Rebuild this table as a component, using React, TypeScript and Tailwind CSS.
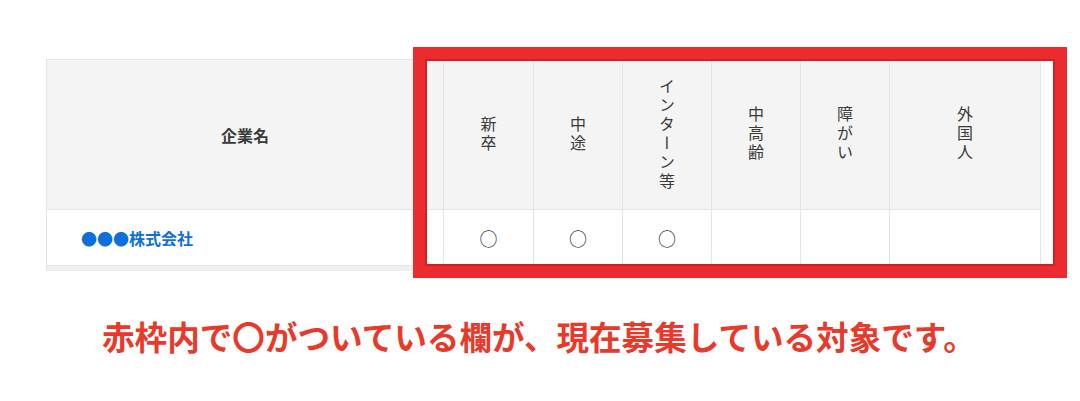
const columns = ["新卒", "中途", "インターン等", "中高齢", "障がい", "外国人"];
const widths = ["w-[90px]", "w-[89px]", "w-[89px]", "w-[89px]", "w-[89px]", "w-[151px]"];
const marks = [true, true, true, false, false, false];

const App = () => {
  return (
    <div
      className="relative h-[401px] w-[1080px] overflow-hidden bg-white"
      style={{ fontFamily: '"Noto Sans CJK JP", "Noto Sans", sans-serif' }}
    >
      {/* Table */}
      <div className="pl-[46px] pt-[59px]">
        <table className="w-[994px] table-fixed border-collapse border border-[#e4e4e4] text-[#3a3a3a]">
          <thead>
            <tr className="h-[150px] bg-[#f4f4f4]">
              <th className="w-[397px] border border-[#e4e4e4] text-[16px] font-bold">企業名</th>
              {columns.map((col, i) => (
                <th key={col} className={`${widths[i]} border border-[#e4e4e4] p-0 align-middle font-normal`}>
                  <div className="flex justify-center">
                    <span className="text-[16px] leading-none tracking-[3px] [writing-mode:vertical-rl]">
                      {col}
                    </span>
                  </div>
                </th>
              ))}
            </tr>
          </thead>
          <tbody>
            <tr className="h-[56px] bg-white">
              <td className="border border-[#e4e4e4] pl-[34px] text-[16px] font-bold text-[#0d6fd9]">
                ●●●株式会社
              </td>
              {marks.map((m, i) => (
                <td key={i} className="border border-[#e4e4e4] text-center text-[18px] leading-none text-[#333]">
                  {m ? "○" : ""}
                </td>
              ))}
            </tr>
          </tbody>
        </table>
        <div className="h-[5px] w-[994px] border-x border-[#e4e4e4] bg-[#efefef]" />
      </div>

      {/* Red highlight frame */}
      <div className="absolute left-[413px] top-[47px] h-[231px] w-[654px] border-[14px] border-[#ec2b2f]">
        <div className="absolute -inset-[2px] border-2 border-[#d32025]" />
      </div>

      {/* Caption */}
      <p className="absolute left-[102px] top-[320px] text-[32.6px] font-bold leading-none text-[#e8392b]">
        赤枠内で〇がついている欄が、現在募集している対象です。
      </p>
    </div>
  );
};

export default App;
